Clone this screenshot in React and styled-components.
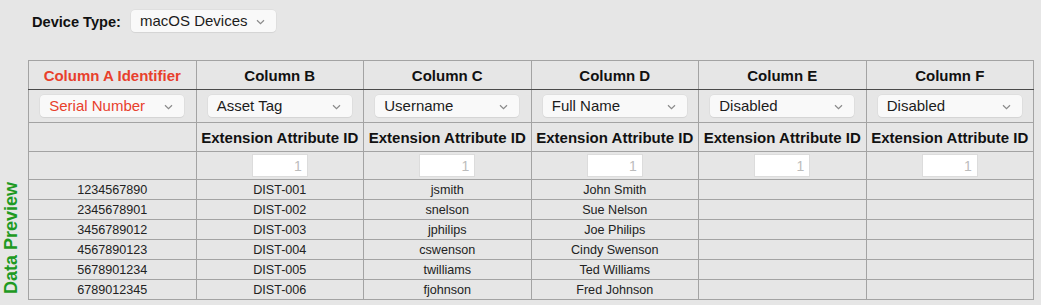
import React from 'react';
import styled, { createGlobalStyle } from 'styled-components';

const GlobalStyle = createGlobalStyle`
  html, body {
    margin: 0;
    padding: 0;
    background: #e6e6e6;
    font-family: 'Liberation Sans', Arial, Helvetica, sans-serif;
    color: #1e1e1e;
  }
`;

const Page = styled.div`
  width: 1041px;
  height: 305px;
  overflow: hidden;
`;

const TopBar = styled.div`
  display: flex;
  align-items: center;
  gap: 10px;
  padding: 10px 0 0 32px;
  height: 22px;
`;

const FieldLabel = styled.span`
  font-size: 14.6px;
  font-weight: 700;
  color: #111;
  padding-top: 2px;
`;

const SelectBox = styled.div`
  display: flex;
  align-items: center;
  justify-content: space-between;
  box-sizing: border-box;
  width: ${p => p.$width || 145}px;
  height: 22px;
  padding: 0 11px 2px 9px;
  background: #f9f9f9;
  border-radius: 4px;
  box-shadow: 0 0 0 0.5px rgba(0, 0, 0, 0.06), 0 1px 1px rgba(0, 0, 0, 0.05);
  font-size: 15px;
  color: ${p => (p.$accent ? '#e8402c' : '#1c1c1c')};
  margin: ${p => (p.$center ? '0 auto' : '0')};
  text-align: left;

  svg {
    flex: none;
    margin-top: 3px;
  }
`;

const Section = styled.div`
  display: flex;
  align-items: flex-end;
  margin-top: 28px;
`;

const SideLabel = styled.div`
  width: 28px;
  height: 120px;
  display: flex;
  align-items: center;
  justify-content: center;

  span {
    writing-mode: vertical-rl;
    transform: rotate(180deg);
    font-size: 18px;
    font-weight: 700;
    color: #1e9a22;
    white-space: nowrap;
    margin-right: 6px;
    margin-bottom: 3px;
  }
`;

const Table = styled.table`
  width: 1006px;
  table-layout: fixed;
  border-collapse: collapse;
  border: 1px solid #a3a3a3;
`;

const HeadCell = styled.th`
  height: 28px;
  padding: 0;
  font-size: 15px;
  font-weight: 700;
  color: ${p => (p.$accent ? '#e8402c' : '#111')};
  border: 1px solid #a3a3a3;
  border-bottom: 1px solid #4a4a4a;
  text-align: center;
`;

const Cell = styled.td`
  height: ${p => p.$h || 19}px;
  padding: 0;
  border: 1px solid #a3a3a3;
  text-align: center;
  font-size: ${p => (p.$bold ? 15 : 12.6)}px;
  font-weight: ${p => (p.$bold ? 700 : 400)};
  color: ${p => (p.$bold ? '#111' : '#222')};
  white-space: nowrap;
`;

const IdInput = styled.div`
  box-sizing: border-box;
  width: 56px;
  height: 23px;
  margin: 0 auto;
  background: #fff;
  border: 1px solid #dcdcdc;
  font-size: 14px;
  color: #bcbcbc;
  text-align: right;
  line-height: 22px;
  padding-right: 5px;
`;

const Chevron = () => (
  <svg width="9" height="6" viewBox="0 0 9 6" fill="none">
    <path d="M1 1.2L4.5 4.6L8 1.2" stroke="#8a8a8a" strokeWidth="1.2" />
  </svg>
);

const Select = ({ value, accent, width, center }) => (
  <SelectBox $accent={accent} $width={width} $center={center}>
    <span>{value}</span>
    <Chevron />
  </SelectBox>
);

const columns = [
  { title: 'Column A Identifier', value: 'Serial Number', accent: true },
  { title: 'Column B', value: 'Asset Tag' },
  { title: 'Column C', value: 'Username' },
  { title: 'Column D', value: 'Full Name' },
  { title: 'Column E', value: 'Disabled' },
  { title: 'Column F', value: 'Disabled' },
];

const rows = [
  ['1234567890', 'DIST-001', 'jsmith', 'John Smith'],
  ['2345678901', 'DIST-002', 'snelson', 'Sue Nelson'],
  ['3456789012', 'DIST-003', 'jphilips', 'Joe Philips'],
  ['4567890123', 'DIST-004', 'cswenson', 'Cindy Swenson'],
  ['5678901234', 'DIST-005', 'twilliams', 'Ted Williams'],
  ['6789012345', 'DIST-006', 'fjohnson', 'Fred Johnson'],
];

export default function App() {
  return (
    <Page>
      <GlobalStyle />
      <TopBar>
        <FieldLabel>Device Type:</FieldLabel>
        <Select value="macOS Devices" />
      </TopBar>
      <Section>
        <SideLabel>
          <span>Data Preview</span>
        </SideLabel>
        <Table>
          <thead>
            <tr>
              {columns.map(c => (
                <HeadCell key={c.title} $accent={c.accent}>{c.title}</HeadCell>
              ))}
            </tr>
          </thead>
          <tbody>
            <tr>
              {columns.map(c => (
                <Cell key={c.title} $h={32}>
                  <Select value={c.value} accent={c.accent} width={144} center />
                </Cell>
              ))}
            </tr>
            <tr>
              {columns.map((c, i) => (
                <Cell key={c.title} $h={28} $bold>
                  {i === 0 ? '' : 'Extension Attribute ID'}
                </Cell>
              ))}
            </tr>
            <tr>
              {columns.map((c, i) => (
                <Cell key={c.title} $h={27}>
                  {i === 0 ? null : <IdInput>1</IdInput>}
                </Cell>
              ))}
            </tr>
            {rows.map(r => (
              <tr key={r[0]}>
                {columns.map((c, i) => (
                  <Cell key={c.title}>{r[i] || ''}</Cell>
                ))}
              </tr>
            ))}
          </tbody>
        </Table>
      </Section>
    </Page>
  );
}
